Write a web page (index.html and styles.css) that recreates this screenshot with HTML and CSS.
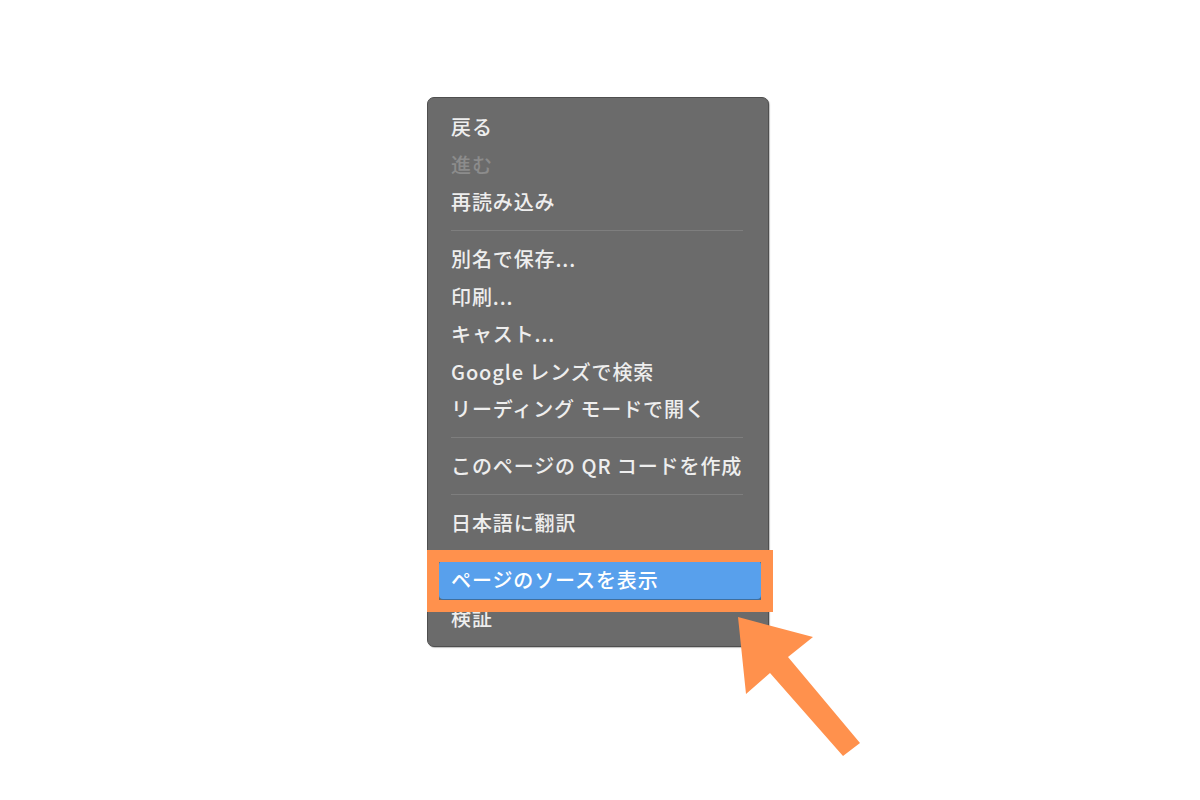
FILE: index.html
```html
<!DOCTYPE html>
<html lang="ja">
<head>
<meta charset="utf-8">
<title>Context menu</title>
<link rel="stylesheet" href="styles.css">
</head>
<body>
<div class="page">
  <div class="menu">
    <div class="item">戻る</div>
    <div class="item disabled">進む</div>
    <div class="item">再読み込み</div>
    <div class="sep"></div>
    <div class="item">別名で保存...</div>
    <div class="item">印刷...</div>
    <div class="item">キャスト...</div>
    <div class="item">Google レンズで検索</div>
    <div class="item">リーディング モードで開く</div>
    <div class="sep"></div>
    <div class="item">このページの QR コードを作成</div>
    <div class="sep"></div>
    <div class="item">日本語に翻訳</div>
    <div class="sep"></div>
    <div class="item active">ページのソースを表示</div>
    <div class="item">検証</div>
  </div>
  <div class="frame"></div>
  <svg class="arrow" width="1200" height="800" viewBox="0 0 1200 800">
    <polygon points="738,617 813,637 788,657 860,743 843,756 770,673 746,694" fill="#ff914d"/>
  </svg>
</div>
</body>
</html>
```

FILE: styles.css
```css
html, body {
  margin: 0;
  padding: 0;
  background: #ffffff;
}

.page {
  position: relative;
  width: 1200px;
  height: 800px;
  box-sizing: border-box;
  padding-top: 97px;
  padding-left: 427px;
  overflow: hidden;
}

.menu {
  width: 342px;
  box-sizing: border-box;
  background: #6b6b6b;
  border: 1px solid #4f4f4f;
  border-radius: 7px;
  box-shadow: 1px 1px 1px rgba(0, 0, 0, 0.25);
  padding: 10px 0 9px;
  font-family: "Noto Sans CJK JP", "Noto Sans", sans-serif;
  font-size: 20px;
  font-weight: 500;
  letter-spacing: 0.9px;
}

.item {
  height: 37.5px;
  line-height: 37.5px;
  padding-left: 23px;
  color: #eeeeee;
  white-space: nowrap;
}

.item.disabled {
  color: #8c8c8c;
}

.item.active {
  height: 38px;
  line-height: 38px;
  margin: 0 7px 0 11px;
  padding-left: 12px;
  background: #58a0ec;
  border-radius: 4px;
  box-shadow: 1px 1px 0 #3f6f9f;
  color: #ffffff;
}

.sep {
  height: 19.5px;
  margin: 0 25px 0 23px;
  display: flex;
  align-items: center;
}

.sep::before {
  content: "";
  display: block;
  width: 100%;
  height: 1px;
  background: #7e7e7e;
}

.frame {
  position: absolute;
  left: 427px;
  top: 550px;
  width: 346px;
  height: 62px;
  box-sizing: border-box;
  border: 12px solid #ff914d;
}

.arrow {
  position: absolute;
  left: 0;
  top: 0;
}
```
